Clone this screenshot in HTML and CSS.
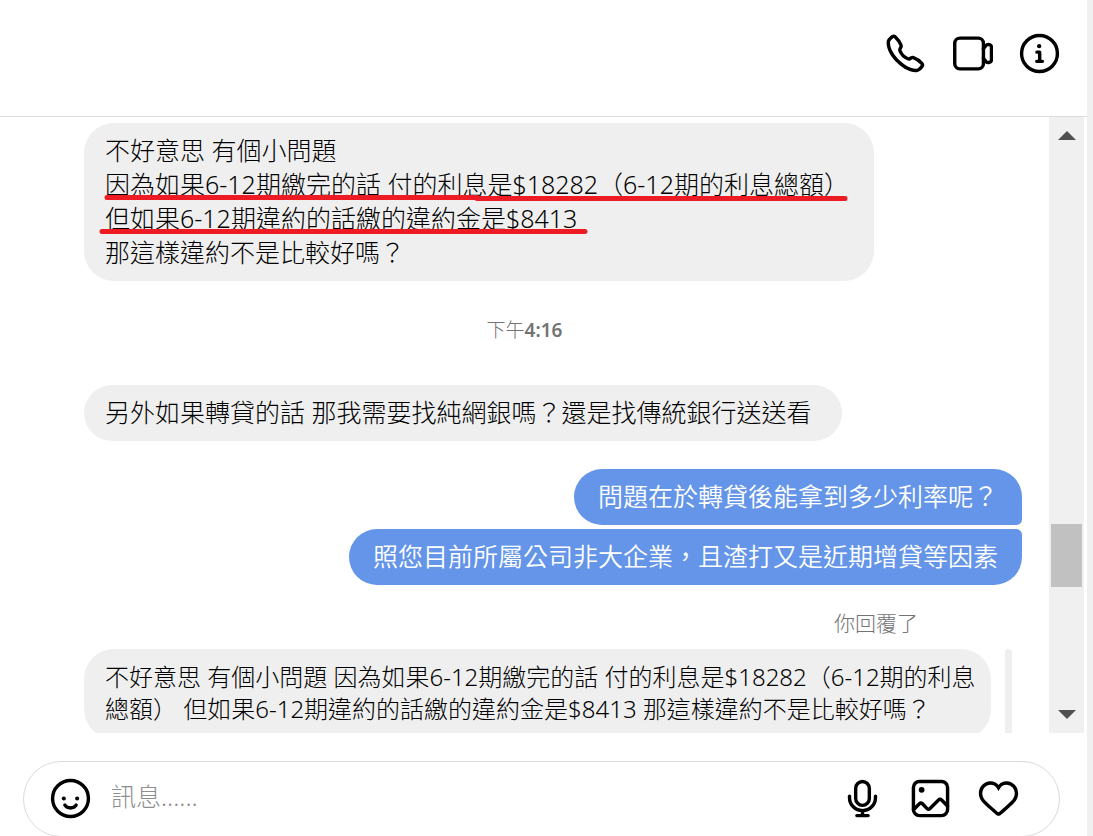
FILE: index.html
```html
<!DOCTYPE html>
<html lang="zh-Hant-TW">
<head>
<meta charset="utf-8">
<meta name="viewport" content="width=device-width, initial-scale=1">
<title>訊息</title>
<link rel="stylesheet" href="styles.css">
</head>
<body>
<div class="page">
  <main class="chat">
    <header class="chat-header">
      <button class="icon-button" type="button" aria-label="語音通話">
        <svg class="icon" viewBox="0 0 24 24"><path class="solid" d="M18.227 22.912c-4.913 0-9.286-3.627-11.486-5.828C4.486 14.83.731 10.291.921 5.231a3.289 3.289 0 0 1 .908-2.138 17.116 17.116 0 0 1 1.865-1.71a2.307 2.307 0 0 1 3.004.174 13.283 13.283 0 0 1 3.658 5.325 2.551 2.551 0 0 1-.19 1.941l-.455.853a.463.463 0 0 0-.024.387 7.57 7.57 0 0 0 4.077 4.075.455.455 0 0 0 .386-.024l.853-.455a2.548 2.548 0 0 1 1.94-.19 13.278 13.278 0 0 1 5.326 3.658 2.309 2.309 0 0 1 .174 3.003 17.319 17.319 0 0 1-1.71 1.866 3.29 3.29 0 0 1-2.138.91 10.27 10.27 0 0 1-.368.006Zm-13.144-20a.27.27 0 0 0-.167.054A15.121 15.121 0 0 0 3.28 4.47a1.289 1.289 0 0 0-.36.836c-.161 4.301 3.21 8.34 5.235 10.364s6.06 5.403 10.366 5.236a1.284 1.284 0 0 0 .835-.36 15.217 15.217 0 0 0 1.504-1.637.324.324 0 0 0-.047-.41 11.62 11.62 0 0 0-4.457-3.119.545.545 0 0 0-.411.044l-.854.455a2.452 2.452 0 0 1-2.071.116 9.571 9.571 0 0 1-5.189-5.188 2.457 2.457 0 0 1 .115-2.071l.456-.855a.544.544 0 0 0 .043-.41 11.629 11.629 0 0 0-3.118-4.458.36.36 0 0 0-.244-.1Z"/></svg>
      </button>
      <button class="icon-button" type="button" aria-label="視訊通話">
        <svg class="icon" viewBox="0 0 24 24"><rect x="1.6" y="3" width="16.8" height="18" rx="3"/><path d="M18.400 9.200l1.500-1.900c1-1.100 3.200-.5 3.200.9v7.600c0 1.400-2.200 2-3.200.9L18.400 14.800"/></svg>
      </button>
      <button class="icon-button" type="button" aria-label="對話資訊">
        <svg class="icon" viewBox="0 0 24 24"><circle cx="12" cy="12" r="10.500"/><circle class="solid" cx="11.800" cy="7.700" r="1.250"/><path d="M10.500 11.200h1.600v5.200M10.400 16.600h3.300"/></svg>
      </button>
    </header>

    <div class="thread">
      <section class="messages" aria-label="對話">
        <div class="bubble bubble-in">不好意思 有個小問題<br>因為如果6-12期繳完的話 付的利息是$18282（6-12期的利息總額）<br>但如果6-12期違約的話繳的違約金是$8413<br>那這樣違約不是比較好嗎？
          <svg class="marks" viewBox="0 0 750 42" aria-hidden="true"><path d="M8 4.500H378M378 5.500H746M3 38.500H486"/></svg>
        </div>
        <time class="time">下午<b>4:16</b></time>
        <div class="bubble bubble-in bubble-short">另外如果轉貸的話 那我需要找純網銀嗎？還是找傳統銀行送送看</div>
        <div class="sent">
          <div class="bubble bubble-out">問題在於轉貸後能拿到多少利率呢？</div>
          <div class="bubble bubble-out">照您目前所屬公司非大企業，且渣打又是近期增貸等因素</div>
        </div>
        <p class="reply-label">你回覆了</p>
        <div class="reply">
          <blockquote class="quote">不好意思 有個小問題 因為如果6-12期繳完的話 付的利息是$18282（6-12期的利息總額） 但如果6-12期違約的話繳的違約金是$8413 那這樣違約不是比較好嗎？</blockquote>
          <span class="reply-bar"></span>
        </div>
      </section>
      <div class="scrollbar" aria-hidden="true">
        <svg class="arrow" viewBox="0 0 18 9"><path d="M0 9L9 0l9 9z"/></svg>
        <div class="track"><div class="thumb"></div></div>
        <svg class="arrow" viewBox="0 0 18 9"><path d="M0 0l9 9 9-9z"/></svg>
      </div>
    </div>

    <form class="composer">
      <button class="icon-button" type="button" aria-label="選擇表情符號">
        <svg class="icon" viewBox="0 0 24 24"><circle cx="12" cy="12" r="10.500"/><circle class="solid" cx="8.100" cy="12" r="1.200"/><circle class="solid" cx="15.900" cy="12" r="1.200"/><path d="M8.700 15.900c1.500 2.200 5.100 2.200 6.600 0"/></svg>
      </button>
      <input class="message-input" type="text" aria-label="訊息" placeholder="訊息......">
      <button class="icon-button" type="button" aria-label="語音訊息">
        <svg class="icon" viewBox="0 0 24 24"><rect x="8" y="2" width="8" height="14" rx="4"/><path d="M4.400 10.600v.9c0 4.200 3.400 7.600 7.600 7.600s7.600-3.400 7.600-7.600v-.9M12 19v3M8.700 22h6.600"/></svg>
      </button>
      <button class="icon-button" type="button" aria-label="新增相片或影片">
        <svg class="icon" viewBox="0 0 24 24"><rect x="2" y="2" width="20" height="20" rx="3.500"/><circle class="solid" cx="6.800" cy="6.900" r="1.700"/><path d="M2 18.600l3.500-3.500c.6-.6 1.200-.6 1.800 0l2.700 2.800c.5.500 1.200.5 1.700 0l5-5c.6-.6 1.200-.6 1.800 0l3.500 3.500"/></svg>
      </button>
      <button class="icon-button" type="button" aria-label="讚">
        <svg class="icon" viewBox="0 0 24 24"><path class="solid" d="M16.792 3.904A4.989 4.989 0 0 1 21.500 9.122c0 3.072-2.652 4.959-5.197 7.222-2.512 2.243-3.865 3.469-4.303 3.752-.477-.309-2.143-1.823-4.303-3.752C5.141 14.072 2.500 12.167 2.500 9.122a4.989 4.989 0 0 1 4.708-5.218 4.210 4.210 0 0 1 3.675 1.941c.84 1.175.98 1.763 1.120 1.763s.278-.588 1.110-1.766a4.170 4.170 0 0 1 3.679-1.938m0-2a6.040 6.040 0 0 0-4.797 2.127 6.052 6.052 0 0 0-4.787-2.127A6.985 6.985 0 0 0 .5 9.122c0 3.610 2.550 5.827 5.015 7.970.283.246.569.494.853.747l1.027.918a44.998 44.998 0 0 0 3.518 3.018 2 2 0 0 0 2.174 0 45.263 45.263 0 0 0 3.626-3.115l.922-.824c.293-.260.590-.519.885-.774 2.334-2.025 4.980-4.320 4.980-7.940a6.985 6.985 0 0 0-6.708-7.218Z"/></svg>
      </button>
    </form>
  </main>
  <div class="gutter"></div>
</div>
</body>
</html>
```

FILE: styles.css
```css
* {
  box-sizing: border-box;
}

body {
  margin: 0;
  background: #fff;
  color: #000;
  font-family: "Noto Sans", "Noto Sans CJK TC", sans-serif;
  font-size: 25px;
  font-weight: 300;
  line-height: 34px;
}

.page {
  display: flex;
  height: 100vh;
  overflow: hidden;
}

.chat {
  display: flex;
  flex: 1;
  flex-direction: column;
  min-width: 0;
}

.gutter {
  flex: 0 0 6px;
  background: #f0f0f0;
}

.chat-header {
  display: flex;
  flex: none;
  align-items: center;
  justify-content: flex-end;
  gap: 26px;
  padding: 33px 27px 42px;
  border-bottom: 1px solid #dbdbdb;
}

.icon-button {
  display: block;
  flex: none;
  padding: 0;
  border: 0;
  background: none;
  color: inherit;
  cursor: pointer;
}

.icon {
  display: block;
  width: 41px;
  height: 41px;
  fill: none;
  stroke: currentColor;
  stroke-width: 2;
  stroke-linecap: round;
  stroke-linejoin: round;
}

.icon .solid {
  fill: currentColor;
  stroke: none;
}

.thread {
  display: flex;
  flex: 1;
  min-height: 0;
  padding-right: 3px;
}

.messages {
  display: flex;
  flex: 1;
  flex-direction: column;
  align-items: flex-start;
  min-width: 0;
  padding: 6px 27px 0 84px;
  overflow: hidden;
}

.bubble {
  position: relative;
  flex: none;
  padding: 10px 24px 12px;
  border-radius: 30px;
}

.bubble-in {
  padding-right: 25px;
  padding-left: 21px;
  background: #efefef;
}

.bubble-short {
  padding-right: 30px;
}

.bubble-out {
  background: #6495e8;
  color: #fff;
  font-weight: 350;
}

.bubble-out:first-child {
  border-bottom-right-radius: 6px;
}

.bubble-out:last-child {
  border-top-right-radius: 6px;
}

.marks {
  position: absolute;
  top: 70px;
  left: 15px;
  width: 750px;
  height: 42px;
  fill: none;
  stroke: #ed1c24;
  stroke-width: 5;
  stroke-linecap: round;
}

.time {
  align-self: center;
  margin: 34px 0 40px;
  padding-right: 57px;
  color: #737373;
  font-size: 19px;
  line-height: 30px;
}

.time b {
  font-weight: 600;
}

.sent {
  display: flex;
  flex: none;
  flex-direction: column;
  align-items: flex-end;
  align-self: stretch;
  gap: 4px;
  margin-top: 28px;
}

.reply-label {
  align-self: flex-end;
  margin: 23px 104px 11px 0;
  color: #737373;
  font-size: 21px;
  line-height: 30px;
}

.reply {
  display: flex;
  flex: none;
  align-self: stretch;
  gap: 14px;
  padding-right: 10px;
}

.quote {
  flex: 1;
  margin: 0;
  padding: 12px 14px 14px 21px;
  border-radius: 30px;
  background: #efefef;
  font-size: 24px;
  line-height: 32px;
}

.reply-bar {
  flex: 0 0 7px;
  border-radius: 4px;
  background: #efefef;
}

.scrollbar {
  display: flex;
  flex: 0 0 35px;
  flex-direction: column;
  align-items: center;
  padding: 14px 2px;
  background: #f0f0f0;
}

.arrow {
  flex: none;
  width: 18px;
  height: 9px;
  fill: #505050;
}

.track {
  display: flex;
  flex: 1;
  flex-direction: column;
  align-self: stretch;
  justify-content: flex-end;
  padding-bottom: 123px;
}

.thumb {
  height: 63px;
  background: #c1c1c1;
}

.composer {
  display: flex;
  flex: none;
  align-items: center;
  gap: 27px;
  height: 76px;
  margin: 28px 27px -1px 23px;
  padding: 0 40px 2px 26px;
  border: 1px solid #dbdbdb;
  border-radius: 38px;
}

.message-input {
  flex: 1;
  min-width: 0;
  margin-left: -7px;
  padding: 0 0 4px;
  border: 0;
  outline: 0;
  background: none;
  color: #000;
  font: inherit;
}

.message-input::placeholder {
  color: #8e8e8e;
  opacity: 1;
}
```
